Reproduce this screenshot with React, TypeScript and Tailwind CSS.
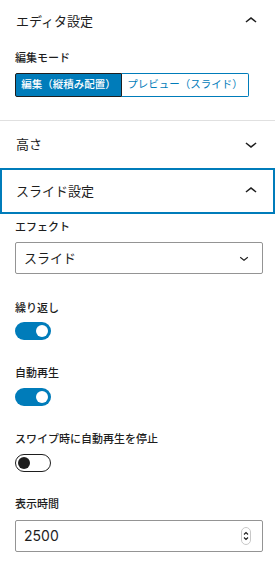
import type { ReactNode } from "react";

function ChevronUp() {
  return (
    <svg width="24" height="24" viewBox="0 0 24 24" className="shrink-0">
      <path d="M6.5 12.4L12 8l5.5 4.4-.9 1.2L12 10l-4.6 3.6-.9-1.2z" fill="#1e1e1e" />
    </svg>
  );
}

function ChevronDown({ size = 24 }: { size?: number }) {
  return (
    <svg width={size} height={size} viewBox="0 0 24 24" className="shrink-0">
      <path d="M17.5 11.6L12 16l-5.5-4.4.9-1.2L12 14l4.6-3.6 1 1.2z" fill="#1e1e1e" />
    </svg>
  );
}

function PanelHeader({ title, open, focused, className }: { title: string; open: boolean; focused?: boolean; className: string }) {
  return (
    <div
      className={`flex items-center justify-between pl-4 pr-3 ${className} ${
        focused ? "ring-2 ring-inset ring-[#007cba]" : ""
      }`}
    >
      <span className="text-[13px] leading-[20px]">{title}</span>
      {open ? <ChevronUp /> : <ChevronDown />}
    </div>
  );
}

function Label({ children, className = "" }: { children: ReactNode; className?: string }) {
  return <div className={`text-[11px] font-medium leading-[16px] ${className}`}>{children}</div>;
}

function Toggle({ on }: { on: boolean }) {
  return on ? (
    <div className="flex h-[18px] w-[36px] items-center justify-end rounded-full bg-[#007cba] pr-[3px]">
      <span className="h-[12px] w-[12px] rounded-full bg-white" />
    </div>
  ) : (
    <div className="flex h-[18px] w-[36px] items-center rounded-full border border-[#1e1e1e] bg-white pl-[2px]">
      <span className="h-[12px] w-[12px] rounded-full bg-[#1e1e1e]" />
    </div>
  );
}

export default function App() {
  return (
    <div className="h-[566px] w-[275px] overflow-hidden bg-white text-[#1e1e1e] font-['Inter','Noto_Sans_CJK_JP',sans-serif]">
      {/* エディタ設定 */}
      <div className="border-b border-[#e0e0e0]">
        <PanelHeader title="エディタ設定" open className="h-[45px] pb-[3px]" />
        <div className="pl-[15px] pr-3 pt-[5px] pb-[23px]">
          <Label className="mb-[7px]">編集モード</Label>
          <div className="flex h-[24px] text-[10.5px] leading-[14px]">
            <div className="flex w-[107px] items-center justify-center rounded-l-[2px] border border-[#1e1e1e] bg-[#007cba] font-medium text-white">
              編集（縦積み配置）
            </div>
            <div className="flex w-[127px] items-center justify-center rounded-r-[2px] border border-l-0 border-[#007cba] bg-white text-[#007cba]">
              プレビュー（スライド）
            </div>
          </div>
        </div>
      </div>

      {/* 高さ */}
      <PanelHeader title="高さ" open={false} className="h-[47px] pb-[2px]" />

      {/* スライド設定 */}
      <PanelHeader title="スライド設定" open focused className="h-[46px] pb-[1px]" />
      <div className="pl-[15px] pr-3 pt-[5px]">
        <Label className="mb-[7px]">エフェクト</Label>
        <div className="flex h-[32px] items-center justify-between rounded-[2px] border border-[#949494] pl-2 pr-[9px]">
          <span className="text-[13px] leading-[20px]">スライド</span>
          <ChevronDown size={18} />
        </div>

        <Label className="mt-[26px] mb-[6px]">繰り返し</Label>
        <Toggle on />

        <Label className="mt-[25px] mb-[7px]">自動再生</Label>
        <Toggle on />

        <Label className="mt-[25px] mb-[7px]">スワイプ時に自動再生を停止</Label>
        <Toggle on={false} />

        <Label className="mt-[24px] mb-[8px]">表示時間</Label>
        <div className="flex h-[32px] items-center justify-between rounded-[2px] border border-[#949494] pl-2 pr-[11px]">
          <span className="text-[14px] leading-[20px]">2500</span>
          <svg width="10" height="18" viewBox="0 0 10 18">
            <rect x="0.5" y="0.5" width="9" height="17" rx="4.5" fill="#fff" stroke="#c8c8c8" />
            <path d="M3 7.5L5 5.5L7 7.5" fill="none" stroke="#1e1e1e" strokeWidth="1.1" />
            <path d="M3 10.5L5 12.5L7 10.5" fill="none" stroke="#1e1e1e" strokeWidth="1.1" />
          </svg>
        </div>
      </div>
    </div>
  );
}
